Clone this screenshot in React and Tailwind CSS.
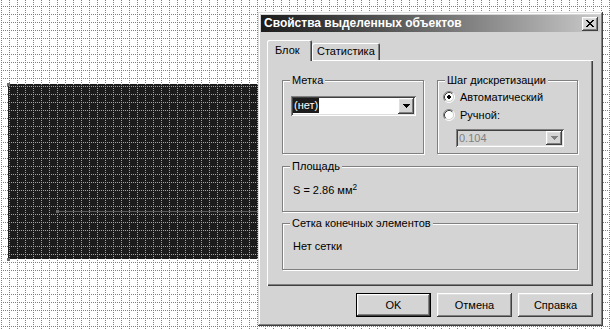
const raised =
  'shadow-[inset_-1px_-1px_#404040,inset_1px_1px_#fff,inset_-2px_-2px_#808080,inset_2px_2px_#dfdfdf]';
const sunken =
  'shadow-[inset_1px_1px_#808080,inset_-1px_-1px_#fff,inset_2px_2px_#404040,inset_-2px_-2px_#dfdfdf]';

function Canvas() {
  const dots = 'M0 0h1v1H0zM0 2h1v1H0zM0 4h1v1H0zM0 6h1v1H0zM2 0h1v1H2zM4 0h1v1H4zM6 0h1v1H6z';
  return (
    <svg className="absolute inset-0" width="610" height="329">
      <defs>
        <pattern id="gridWhite" x="1" y="6" width="8" height="8" patternUnits="userSpaceOnUse">
          <path d={dots} fill="#808080" />
        </pattern>
        <pattern id="gridDark" x="1" y="6" width="8" height="8" patternUnits="userSpaceOnUse">
          <path d={dots} fill="#a4a4a4" />
        </pattern>
      </defs>
      <rect width="610" height="329" fill="url(#gridWhite)" />
      <rect x="8" y="84" width="252" height="175" fill="#1c1c1c" />
      <rect x="8" y="84" width="252" height="175" fill="url(#gridDark)" />
      <path d="M57 211.5H258" stroke="#5a5a5a" />
      <path d="M56 210h3v3h-3z M7 83h3v3H7z M7 258h3v3H7z" fill="#6a6a6a" />
    </svg>
  );
}

function Arrow({ color = '#000' }) {
  return (
    <svg width="7" height="4" viewBox="0 0 7 4">
      <path d="M0 0h7v1H0zM1 1h5v1H1zM2 2h3v1H2zM3 3h1v1H3z" fill={color} />
    </svg>
  );
}

function Radio({ checked }) {
  return (
    <svg width="12" height="12" viewBox="0 0 12 12" className="shrink-0">
      <circle cx="6" cy="6" r="4.5" fill="#fff" />
      <path d="M9.89 2.11A5.5 5.5 0 0 0 2.11 9.89" stroke="#808080" fill="none" />
      <path d="M9.89 2.11A5.5 5.5 0 0 1 2.11 9.89" stroke="#fff" fill="none" />
      <path d="M9.18 2.82A4.5 4.5 0 0 0 2.82 9.18" stroke="#404040" fill="none" />
      <path d="M9.18 2.82A4.5 4.5 0 0 1 2.82 9.18" stroke="#d4d4d4" fill="none" />
      {checked && <path d="M5 4h2v1h1v2H7v1H5V7H4V5h1z" fill="#000" />}
    </svg>
  );
}

function Group({ label, className, children }) {
  return (
    <div
      className={`flex flex-col border border-[#808080] shadow-[inset_1px_1px_#fff,1px_1px_#fff] ${className}`}
    >
      <span className="-mt-[7px] ml-[7px] self-start bg-[#d4d4d4] px-[2px] leading-[13px]">{label}</span>
      {children}
    </div>
  );
}

function Button({ children, isDefault }) {
  return (
    <button
      className={`w-[75px] h-[24px] flex items-center justify-center font-normal bg-[#d4d4d4] ${
        isDefault ? 'border border-black' : ''
      } ${raised}`}
    >
      {children}
    </button>
  );
}

export default function App() {
  return (
    <div className="relative w-[610px] h-[329px] overflow-hidden bg-white font-['Liberation_Sans',Arial,sans-serif] text-[11px] leading-[13px] text-black">
      <Canvas />

      <div className="absolute left-[258px] top-[12px] w-[345px] h-[314px] flex flex-col p-[3px] bg-[#d4d4d4] shadow-[inset_-1px_-1px_#404040,inset_1px_1px_#dfdfdf,inset_-2px_-2px_#808080,inset_2px_2px_#fff]">
        {/* title bar */}
        <div className="h-[17px] flex items-center justify-between pl-[3px] pr-[2px] bg-linear-to-r from-[#1c1c1c] to-[#cacaca]">
          <span className="text-white font-bold text-[12px]">Свойства выделенных объектов</span>
          <div className={`w-[16px] h-[14px] flex items-center justify-center bg-[#d4d4d4] ${raised}`}>
            <svg width="8" height="7" viewBox="0 0 8 7">
              <path
                d="M0 0h2v1H0zM6 0h2v1H6zM1 1h2v1H1zM5 1h2v1H5zM2 2h4v1H2zM3 3h2v1H3zM2 4h4v1H2zM1 5h2v1H1zM5 5h2v1H5zM0 6h2v1H0zM6 6h2v1H6z"
                fill="#000"
              />
            </svg>
          </div>
        </div>

        <div className="w-[326px] ml-[6px] pt-[8px] flex flex-col">
          {/* tabs */}
          <div className="relative z-10 flex items-end h-[20px]">
            <div className="w-[45px] h-[21px] -mb-px pl-[8px] pt-[4px] rounded-t-[2px] bg-[#d4d4d4] shadow-[inset_1px_1px_#fff,inset_-1px_0_#404040,inset_-2px_0_#808080]">
              Блок
            </div>
            <div className="w-[68px] h-[17px] pl-[5px] pt-[2px] rounded-t-[2px] bg-[#d4d4d4] shadow-[inset_1px_1px_#fff,inset_-1px_0_#404040,inset_-2px_0_#808080]">
              Статистика
            </div>
          </div>

          {/* panel */}
          <div className="h-[226px] flex flex-col px-[15px] pt-[20px] shadow-[inset_1px_1px_#fff,inset_-1px_-1px_#404040,inset_-2px_-2px_#808080]">
            <div className="flex gap-[13px]">
              <Group label="Метка" className="w-[142px] h-[74px]">
                <div className={`mt-[9px] ml-[8px] w-[125px] h-[20px] flex p-[2px] bg-white ${sunken}`}>
                  <div className="flex-1 flex">
                    <span className="h-[15px] px-[1px] leading-[15px] bg-[#1c1c1c] text-white">(нет)</span>
                  </div>
                  <div className={`w-[16px] h-[16px] flex items-center justify-center bg-[#d4d4d4] ${raised}`}>
                    <Arrow />
                  </div>
                </div>
              </Group>

              <Group label="Шаг дискретизации" className="w-[141px] h-[74px]">
                <div className="mt-[4px] ml-[5px] h-[12px] flex items-center gap-[5px]">
                  <Radio checked />
                  <span>Автоматический</span>
                </div>
                <div className="mt-[6px] ml-[5px] h-[12px] flex items-center gap-[5px]">
                  <Radio />
                  <span>Ручной:</span>
                </div>
                <div className={`mt-[8px] ml-[18px] w-[108px] h-[18px] flex p-[2px] bg-[#d4d4d4] ${sunken}`}>
                  <span className="flex-1 pl-[1px] leading-[14px] text-[#808080]">0.104</span>
                  <div className={`w-[16px] h-[14px] flex items-center justify-center bg-[#d4d4d4] ${raised}`}>
                    <Arrow color="#808080" />
                  </div>
                </div>
              </Group>
            </div>

            <Group label="Площадь" className="mt-[12px] h-[46px]">
              <span className="mt-[11px] ml-[10px]">
                S = 2.86 мм<sup>2</sup>
              </span>
            </Group>

            <Group label="Сетка конечных элементов" className="mt-[11px] h-[47px]">
              <span className="mt-[10px] ml-[10px]">Нет сетки</span>
            </Group>
          </div>

          {/* buttons */}
          <div className="mt-[7px] flex justify-end gap-[6px]">
            <Button isDefault>OK</Button>
            <Button>Отмена</Button>
            <Button>Справка</Button>
          </div>
        </div>
      </div>
    </div>
  );
}
